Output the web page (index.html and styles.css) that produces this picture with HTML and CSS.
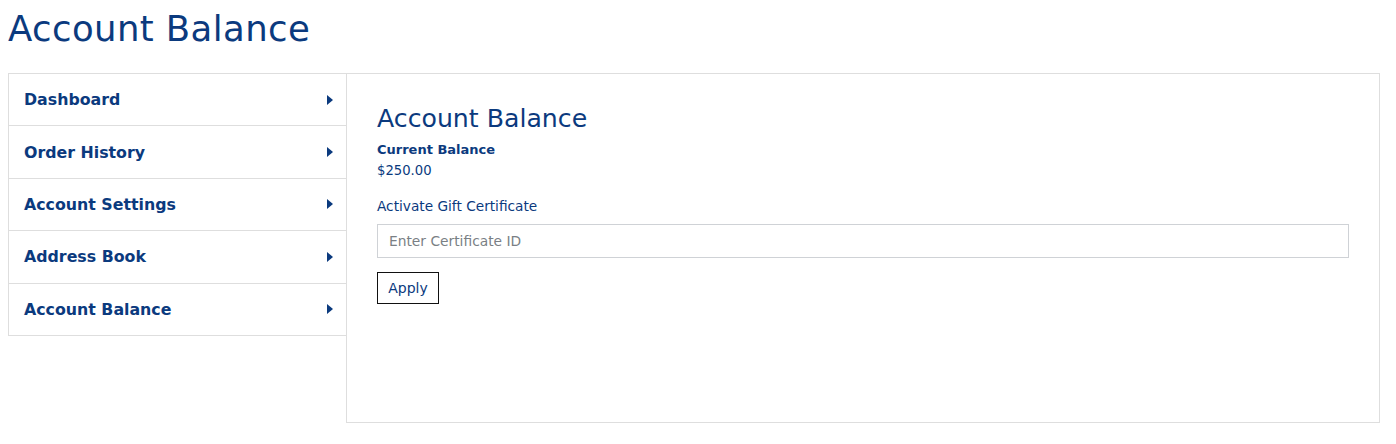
FILE: index.html
```html
<!DOCTYPE html>
<html>
<head>
<meta charset="utf-8">
<link rel="stylesheet" href="styles.css">
</head>
<body>
<h1 class="page-title">Account Balance</h1>
<div class="account">
  <nav class="sidebar">
    <a class="nav-item" href="#"><span>Dashboard</span><span class="caret"></span></a>
    <a class="nav-item" href="#"><span>Order History</span><span class="caret"></span></a>
    <a class="nav-item" href="#"><span>Account Settings</span><span class="caret"></span></a>
    <a class="nav-item" href="#"><span>Address Book</span><span class="caret"></span></a>
    <a class="nav-item" href="#"><span>Account Balance</span><span class="caret"></span></a>
  </nav>
  <main class="panel">
    <h2 class="panel-title">Account Balance</h2>
    <div class="label-strong">Current Balance</div>
    <div class="amount">$250.00</div>
    <label class="field-label" for="cert">Activate Gift Certificate</label>
    <input id="cert" class="field" type="text" placeholder="Enter Certificate ID">
    <button class="apply">Apply</button>
  </main>
</div>
</body>
</html>
```
FILE: styles.css
```css
body {
  margin: 8px;
  font-family: "DejaVu Sans", sans-serif;
  color: #0b3a7e;
  background: #fff;
}
.page-title {
  margin: 0;
  padding-top: 1px;
  font-size: 35.5px;
  letter-spacing: 0.4px;
  font-weight: 400;
  line-height: 40px;
  color: #0b3a7e;
  height: 65px;
  box-sizing: border-box;
}
.account {
  display: flex;
  align-items: flex-start;
}
.sidebar {
  width: 337px;
  border: 1px solid #dedede;
  border-bottom: none;
  display: flex;
  flex-direction: column;
}
.nav-item {
  display: flex;
  align-items: center;
  justify-content: space-between;
  height: 51.4px;
  padding: 0 13px 0 15px;
  border-bottom: 1px solid #dedede;
  text-decoration: none;
  color: #0b3a7e;
  font-weight: 700;
  font-size: 15.8px;
}
.caret {
  width: 0;
  height: 0;
  border-top: 5px solid transparent;
  border-bottom: 5px solid transparent;
  border-left: 6px solid #0b3a7e;
}
.panel {
  flex: 1;
  margin-left: -1px;
  height: 350px;
  border: 1px solid #dedede;
  padding: 30px 30px 0 30px;
  margin-right: 8px;
  box-sizing: border-box;
}
.panel-title {
  margin: 0;
  font-size: 25.2px;
  font-weight: 400;
  line-height: 30px;
}
.label-strong {
  margin-top: 6px;
  font-weight: 700;
  font-size: 13px;
  line-height: 20px;
}
.amount {
  font-size: 13.2px;
  line-height: 20px;
  margin-top: 1px;
}
.field-label {
  display: block;
  margin-top: 15px;
  font-size: 13.7px;
  line-height: 20px;
}
.field {
  display: block;
  box-sizing: border-box;
  width: 100%;
  height: 34px;
  margin-top: 8px;
  border: 1px solid #cfd2d6;
  padding: 0 11px;
  font-family: inherit;
  font-size: 13.8px;
  color: #0b3a7e;
  outline: none;
}
.field::placeholder {
  color: #7a7f85;
}
.apply {
  display: block;
  margin-top: 14px;
  height: 32px;
  width: 62px;
  padding: 0;
  background: #fff;
  border: 1px solid #111;
  font-family: inherit;
  font-size: 14px;
  color: #0b3a7e;
}
```
